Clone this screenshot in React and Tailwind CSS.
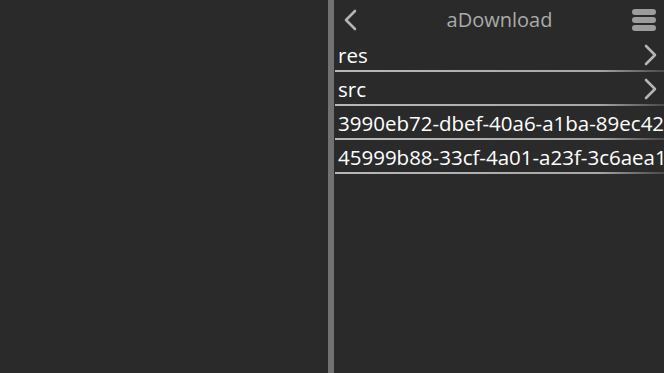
import React from 'react';

const rows = [
  { name: 'res', dir: true },
  { name: 'src', dir: true },
  { name: '3990eb72-dbef-40a6-a1ba-89ec42', dir: false },
  { name: '45999b88-33cf-4a01-a23f-3c6aea1', dir: false },
];

function Chevron({ left }) {
  return (
    <svg width="14" height="22" viewBox="0 0 14 22" className="shrink-0">
      <path
        d={left ? 'M12 2 L3 11 L12 20' : 'M2 2 L11 11 L2 20'}
        fill="none"
        stroke="#b4b4b4"
        strokeWidth="2.6"
        strokeLinecap="round"
        strokeLinejoin="round"
      />
    </svg>
  );
}

export default function App() {
  return (
    <div
      className="flex h-[373px] w-[664px] overflow-hidden bg-[#2a2a2a]"
      style={{ fontFamily: '"Open Sans", "Noto Sans", sans-serif' }}
    >
      <div className="w-[328px] shrink-0 bg-[#2a2a2a]" />
      <div className="w-[6px] shrink-0 bg-[#727272]" />
      <div className="flex min-w-0 flex-1 flex-col pl-[1px]">
        {/* toolbar */}
        <div className="grid h-[38px] grid-cols-[1fr_auto_1fr] items-center pl-[8px] pr-[8px] pt-[1px]">
          <div className="flex">
            <Chevron left />
          </div>
          <span className="text-[20px] text-[#aaaaaa]">aDownload</span>
          <div className="flex justify-end">
            <div className="flex flex-col gap-[2px]">
              <div className="h-[6px] w-[24px] rounded-[3px] bg-[#9c9c9c]" />
              <div className="h-[6px] w-[24px] rounded-[3px] bg-[#9c9c9c]" />
              <div className="h-[6px] w-[24px] rounded-[3px] bg-[#9c9c9c]" />
            </div>
          </div>
        </div>
        {/* file list */}
        <div className="flex flex-col">
          {rows.map((r) => (
            <div key={r.name} className="flex h-[34px] flex-col">
              <div className="flex min-h-0 flex-1 items-center overflow-hidden pr-[6px] pt-[2px]">
                <span className="min-w-0 flex-1 whitespace-nowrap pl-[3px] text-[20.5px] leading-none text-white">
                  {r.name}
                </span>
                {r.dir && <Chevron />}
              </div>
              <div className="h-[2px] bg-gradient-to-r from-[#b8b8b8] via-[#a8a8a8] via-80% to-[#4a4a4a]" />
            </div>
          ))}
        </div>
      </div>
    </div>
  );
}
